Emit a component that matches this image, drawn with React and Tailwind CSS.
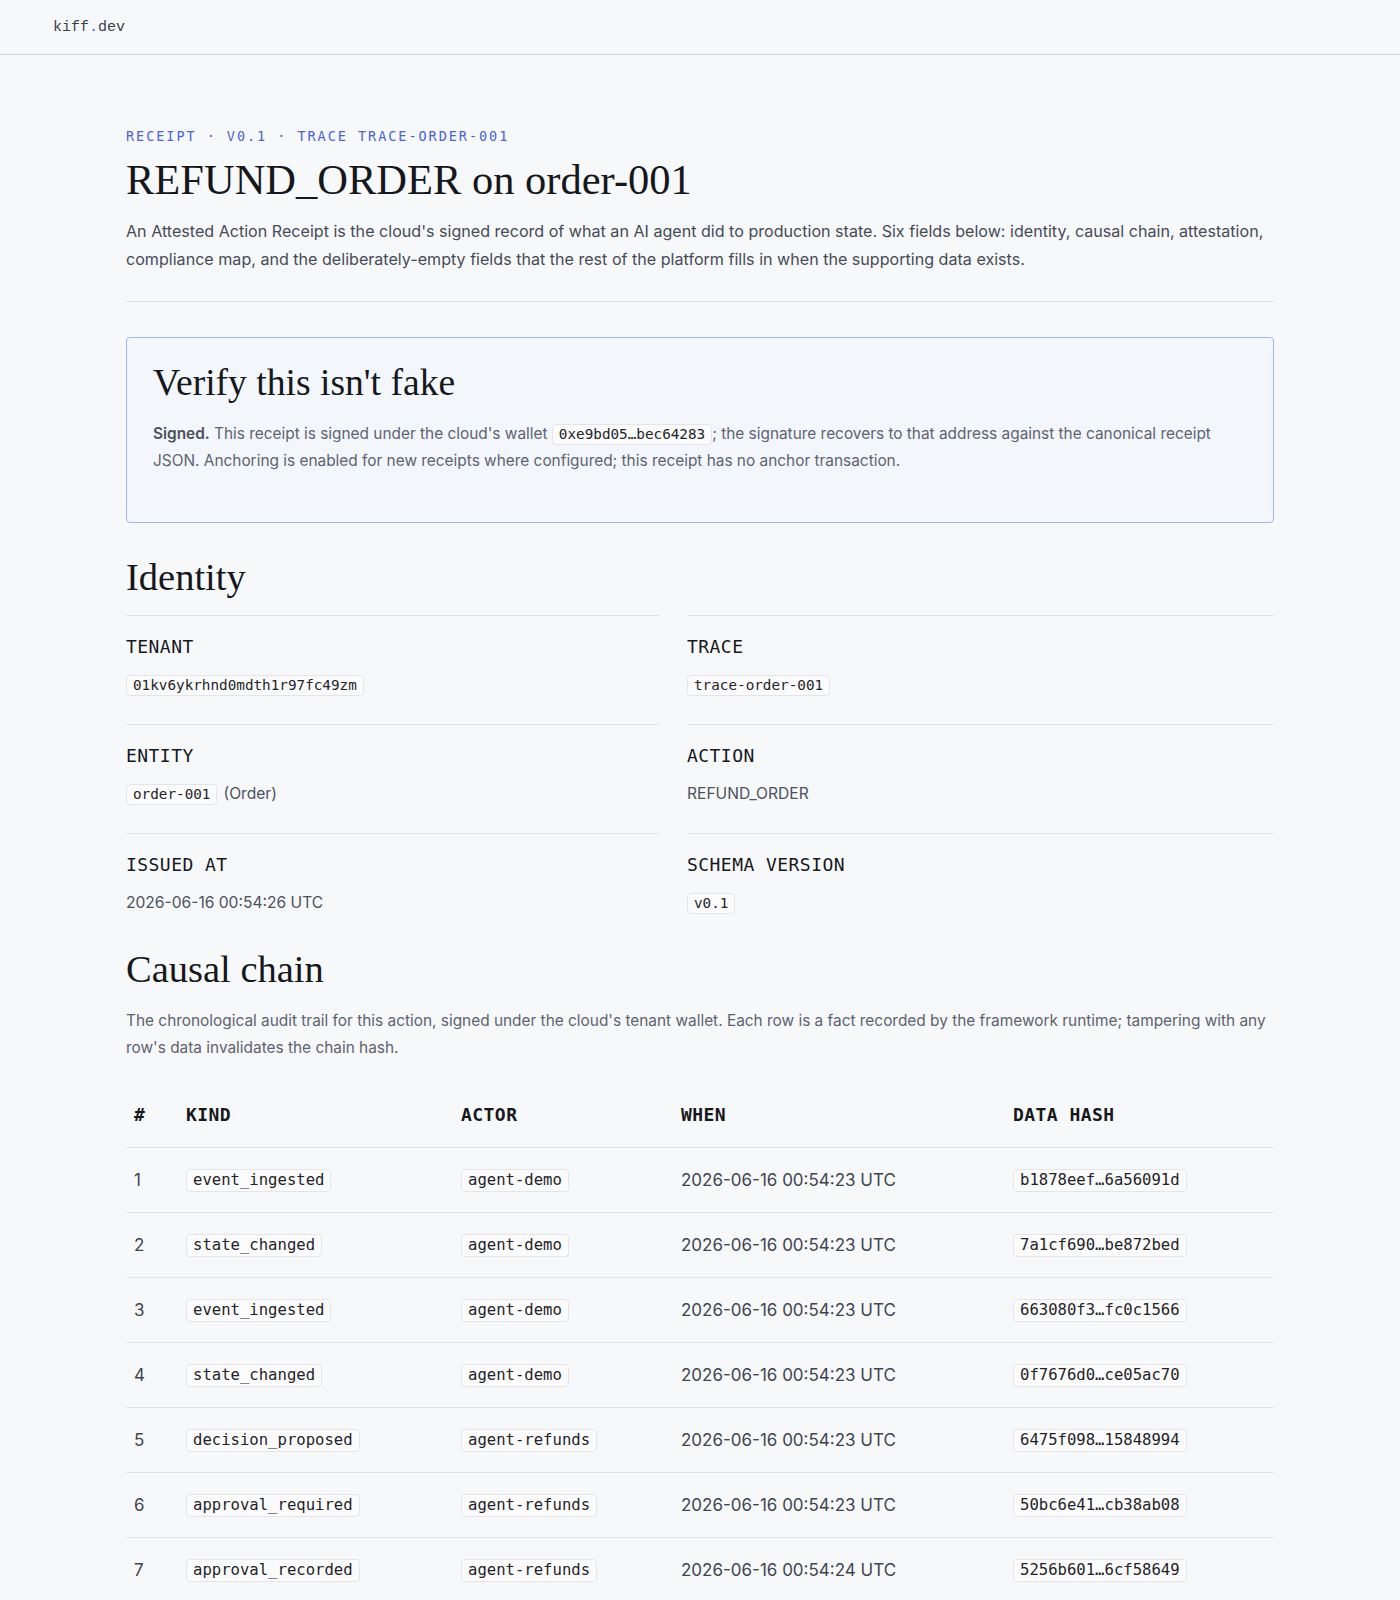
import React from "react";

const serif = { fontFamily: '"Liberation Serif", "DejaVu Serif", serif' };
const mono = { fontFamily: '"DejaVu Sans Mono", monospace' };

function Code({ children, size = "text-[14.3px] leading-[19px]" }) {
  return (
    <code
      className={`inline-block rounded-[4px] border border-[#e3e5ea] bg-[#fbfbfc] px-[6px] align-middle text-[#1f2328] ${size}`}
      style={mono}
    >
      {children}
    </code>
  );
}

function Field({ label, children }) {
  return (
    <div className="border-t border-[#dfe1e6] pt-[17px] pb-[27px]">
      <div className="text-[18px] leading-7 uppercase tracking-[0.025em] text-[#16181d]" style={mono}>
        {label}
      </div>
      <div className="mt-[12px] flex h-6 items-center text-[15.6px] text-[#4b5260]">{children}</div>
    </div>
  );
}

const events = [
  ["event_ingested", "agent-demo", "2026-06-16 00:54:23 UTC", "b1878eef…6a56091d"],
  ["state_changed", "agent-demo", "2026-06-16 00:54:23 UTC", "7a1cf690…be872bed"],
  ["event_ingested", "agent-demo", "2026-06-16 00:54:23 UTC", "663080f3…fc0c1566"],
  ["state_changed", "agent-demo", "2026-06-16 00:54:23 UTC", "0f7676d0…ce05ac70"],
  ["decision_proposed", "agent-refunds", "2026-06-16 00:54:23 UTC", "6475f098…15848994"],
  ["approval_required", "agent-refunds", "2026-06-16 00:54:23 UTC", "50bc6e41…cb38ab08"],
  ["approval_recorded", "agent-refunds", "2026-06-16 00:54:24 UTC", "5256b601…6cf58649"],
];

export default function App() {
  return (
    <div className="min-h-screen bg-[#f7f8fa]" style={{ fontFamily: 'Inter, "Noto Sans", sans-serif' }}>
      <header className="flex h-[55px] items-center border-b border-[#cfd2d8] px-[53px]">
        <span className="pt-[2px] text-[15px] text-[#3d4148]" style={{ fontFamily: '"Liberation Mono", monospace' }}>
          kiff<span className="text-[#3b6fe0]">.</span>dev
        </span>
      </header>

      <main className="mx-auto w-[1148px] pt-[71px] pb-10">
        <div className="text-[13.5px] leading-5 uppercase tracking-[0.145em] text-[#4a63d6]" style={mono}>
          RECEIPT · V0.1 · TRACE TRACE-ORDER-001
        </div>
        <h1 className="mt-[8px] text-[42.5px] leading-[52px] text-[#15171c]" style={serif}>
          REFUND_ORDER on order-001
        </h1>
        <p className="mt-[12px] text-[16.1px] leading-[27.5px] text-[#454b57]">
          An Attested Action Receipt is the cloud's signed record of what an AI agent did to production state. Six fields below: identity, causal chain, attestation, compliance map, and the deliberately-empty fields that the rest of the platform fills in when the supporting data exists.
        </p>
        <hr className="mt-[28px] border-[#dcdfe4]" />

        <section className="mt-[35px] rounded-[4px] border border-[#a6b5e8] bg-[#f3f6fb] px-[26px] pt-[22px] pb-[48px]">
          <h2 className="text-[37.6px] leading-[46px] text-[#15171c]" style={serif}>
            Verify this isn't fake
          </h2>
          <p className="mt-[14px] text-[15.4px] leading-[27px] text-[#5d6370]">
            <strong className="font-semibold text-[#4b515c]">Signed.</strong> This receipt is signed under the cloud's wallet{" "}
            <Code>0xe9bd05…bec64283</Code>; the signature recovers to that address against the canonical receipt JSON. Anchoring is enabled for new receipts where configured; this receipt has no anchor transaction.
          </p>
        </section>

        <h2 className="mt-[31px] text-[38.5px] leading-[46px] text-[#15171c]" style={serif}>
          Identity
        </h2>
        <div className="mt-[15px] grid grid-cols-[533px_1fr] gap-x-[28px]">
          <Field label="Tenant">
            <Code>01kv6ykrhnd0mdth1r97fc49zm</Code>
          </Field>
          <Field label="Trace">
            <Code>trace-order-001</Code>
          </Field>
          <Field label="Entity">
            <Code>order-001</Code>
            <span className="ml-[6px]">(Order)</span>
          </Field>
          <Field label="Action">REFUND_ORDER</Field>
          <Field label="Issued at">2026-06-16 00:54:26 UTC</Field>
          <Field label="Schema version">
            <Code>v0.1</Code>
          </Field>
        </div>

        <h2 className="mt-[4px] text-[38.5px] leading-[46px] text-[#15171c]" style={serif}>
          Causal chain
        </h2>
        <p className="mt-[15px] text-[15.4px] leading-[27px] text-[#5d6370]">
          The chronological audit trail for this action, signed under the cloud's tenant wallet. Each row is a fact recorded by the framework runtime; tampering with any row's data invalidates the chain hash.
        </p>

        <table className="mt-[22px] w-full table-fixed border-collapse">
          <colgroup>
            <col className="w-[52px]" />
            <col className="w-[275px]" />
            <col className="w-[220px]" />
            <col className="w-[332px]" />
            <col />
          </colgroup>
          <thead>
            <tr className="border-b border-[#dfe1e6] text-left text-[18px] uppercase tracking-[0.025em] text-[#16181d]" style={mono}>
              <th className="h-[64px] px-2 leading-6 font-bold">#</th>
              <th className="h-[64px] px-2 leading-6 font-bold">Kind</th>
              <th className="h-[64px] px-2 leading-6 font-bold">Actor</th>
              <th className="h-[64px] px-2 leading-6 font-bold">When</th>
              <th className="h-[64px] px-2 leading-6 font-bold">Data hash</th>
            </tr>
          </thead>
          <tbody>
            {events.map(([kind, actor, when, hash], i) => (
              <tr key={i} className="border-b border-[#dfe1e6] text-[17px] text-[#3f4550]">
                <td className="h-[65px] px-2 leading-6">{i + 1}</td>
                <td className="h-[65px] px-2 leading-6">
                  <Code size="text-[15.6px] leading-[21px]">{kind}</Code>
                </td>
                <td className="h-[65px] px-2 leading-6">
                  <Code size="text-[15.6px] leading-[21px]">{actor}</Code>
                </td>
                <td className="h-[65px] px-2 leading-6">{when}</td>
                <td className="h-[65px] px-2 leading-6">
                  <Code size="text-[15.6px] leading-[21px]">{hash}</Code>
                </td>
              </tr>
            ))}
          </tbody>
        </table>
      </main>
    </div>
  );
}
